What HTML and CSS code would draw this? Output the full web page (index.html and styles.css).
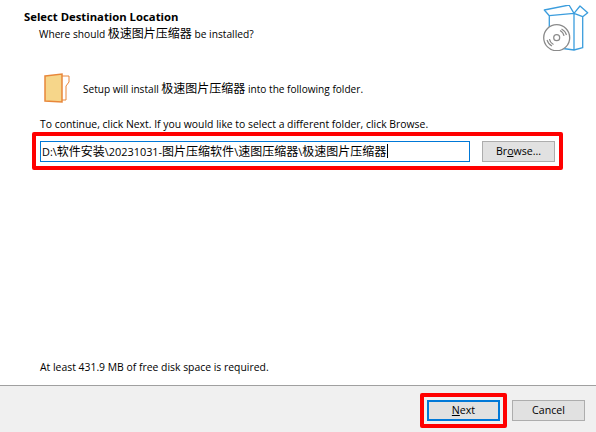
FILE: index.html
```html
<!DOCTYPE html>
<html lang="en">
<head>
  <meta charset="UTF-8">
  <meta name="viewport" content="width=device-width, initial-scale=1.0">
  <title>Setup</title>
  <link rel="stylesheet" href="styles.css">
</head>
<body>
  <div class="wizard">
    <div class="header">
      <div class="header-text">
        <h2>Select Destination Location</h2>
        <p>Where should <span class="cjk">极速图片压缩器</span> be installed?</p>
      </div>
      <svg class="box-icon" width="46" height="46" viewBox="0 0 46 46" fill="none">
        <path d="M1.3 5 L26 0 L31 8.3 L6.3 10.7 Z M6.3 10.7 V22 M31 8.3 V45 L39.7 42.7 V11.7 L31 8.3 L37 1 L44.7 7.7 L39.7 11.7 M31 45 L20 43.5" stroke="#3b9ddd" stroke-width="1.3" stroke-linejoin="round"/>
        <circle cx="13.7" cy="32.7" r="13" fill="#fff" stroke="#8a8a8a" stroke-width="1.3"/>
        <circle cx="13.7" cy="32.7" r="3" stroke="#8a8a8a" stroke-width="1.2"/>
        <path d="M6.5 34 a7.5 7.5 0 0 0 4 5.5 M4 35 a10 10 0 0 0 5 6 M21 31 a7.5 7.5 0 0 0 -4 -5.5 M23.5 30 a10 10 0 0 0 -5 -6" stroke="#8a8a8a" stroke-width="1.1"/>
      </svg>
    </div>
    <div class="content">
      <div class="install-line">
        <svg class="folder-icon" width="26" height="30" viewBox="0 0 26 30" fill="none">
          <path d="M18 3 H25 V9 L22 13 V27 H18" fill="#fff" stroke="#e8873a" stroke-width="1"/>
          <path d="M1 3 L18 1 V29 L1 28 Z" fill="#f6d68a" stroke="#e8873a" stroke-width="1.5"/>
        </svg>
        <span>Setup will install <span class="cjk">极速图片压缩器</span> into the following folder.</span>
      </div>
      <p class="hint">To continue, click Next. If you would like to select a different folder, click Browse.</p>
      <div class="path-row">
        <div class="path-input">D:\<span class="cjk">软件安装</span>\20231031-<span class="cjk">图片压缩软件</span>\<span class="cjk">速图压缩器</span>\<span class="cjk">极速图片压缩器</span><span class="caret"></span></div>
        <button class="btn" type="button">Br<u>o</u>wse...</button>
      </div>
      <p class="space">At least 431.9 MB of free disk space is required.</p>
    </div>
    <div class="footer">
      <div class="next-mark">
        <button class="btn btn-default" type="button"><u>N</u>ext</button>
      </div>
      <button class="btn" type="button">Cancel</button>
    </div>
  </div>
</body>
</html>
```

FILE: styles.css
```css
* {
  box-sizing: border-box;
}
body {
  margin: 0;
  background-color: white;
  color: #000;
  font-family: "Open Sans", "Noto Sans CJK SC", sans-serif;
  font-size: 10.4px;
}
.wizard {
  width: 596px;
  height: 432px;
  display: flex;
  flex-direction: column;
  overflow: hidden;
}
.header {
  height: 66px;
  display: flex;
  justify-content: space-between;
  padding: 5px 7px 0 24px;
}
.header h2 {
  margin: 4px 0 0;
  font-size: 11.3px;
  line-height: 15px;
  font-weight: 700;
}
.header p {
  margin: 1px 0 0 15px;
  font-size: 10.2px;
  line-height: 16px;
}
.cjk {
  font-family: "Noto Sans CJK SC", sans-serif;
  font-size: 12px;
}
.content {
  flex: 1;
  display: flex;
  flex-direction: column;
  padding: 0 0 0 40px;
}
.install-line {
  display: flex;
  align-items: center;
  gap: 13px;
  height: 32px;
  margin: 6px 0 0 4px;
  font-size: 10.1px;
}
.install-line span {
  margin-top: -2px;
}
.hint {
  margin: 12px 0 0;
  line-height: 16px;
}
.path-row {
  display: flex;
  align-items: center;
  gap: 12px;
  width: 531px;
  height: 38px;
  margin: 0 0 0 -8px;
  padding: 0 0 0 4px;
  border: 4px solid #f00;
  border-radius: 2px;
}
.path-input {
  width: 430px;
  height: 21px;
  border: 1px solid #0078d7;
  padding-left: 1px;
  font-size: 10.9px;
  line-height: 17px;
  white-space: nowrap;
  overflow: hidden;
}
.caret {
  display: inline-block;
  width: 1px;
  height: 14px;
  margin-left: 1px;
  background: #000;
  vertical-align: -2px;
}
.btn {
  width: 73px;
  height: 21px;
  padding: 0;
  border: 1px solid #adadad;
  background: #e1e1e1;
  color: #000;
  font-family: "Open Sans", sans-serif;
  font-size: 10.6px;
}
.btn-default {
  border: 2px solid #0078d7;
}
.space {
  margin: auto 0 10px;
  line-height: 16px;
}
.footer {
  height: 47px;
  display: flex;
  justify-content: flex-end;
  align-items: center;
  gap: 5px;
  padding: 2px 11px 0 0;
  background: #f0f0f0;
  border-top: 1px solid #a0a0a0;
}
.next-mark {
  padding: 3px;
  border: 4px solid #f00;
  border-radius: 2px;
}
```
